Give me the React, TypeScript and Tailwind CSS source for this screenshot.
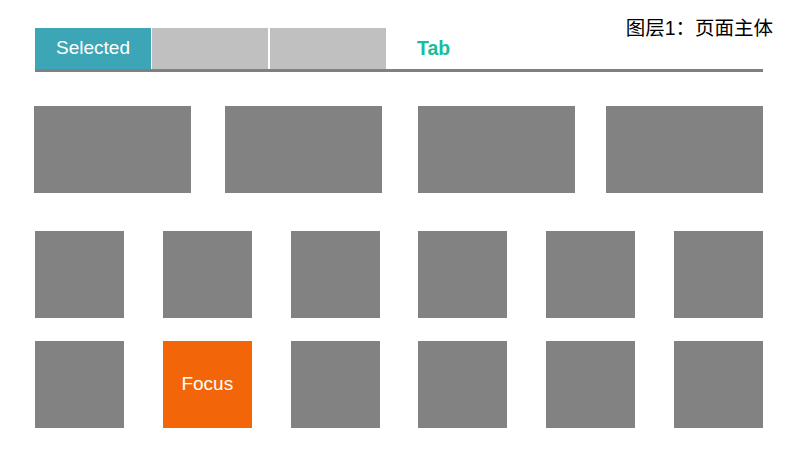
const smallRows = [
  [0, 1, 2, 3, 4, 5],
  [0, 1, 2, 3, 4, 5],
];

export default function App() {
  return (
    <div
      className="relative h-[450px] w-[800px] overflow-hidden bg-white"
      style={{ fontFamily: '"Liberation Sans", Arial, sans-serif' }}
    >
      {/* layer label */}
      <span
        className="absolute right-[27px] top-[19px] text-[19.5px] leading-none text-black"
        style={{ fontFamily: '"Liberation Sans", "Noto Sans CJK SC", sans-serif' }}
      >
        图层1：页面主体
      </span>

      {/* tab bar */}
      <div className="ml-[35px] mt-[28px] flex h-[44px] w-[728px] items-stretch border-b-[3px] border-[#808080]">
        <div className="flex w-[116px] items-center justify-center bg-[#3ca6b7] text-[19px] text-white">
          Selected
        </div>
        <div className="ml-px w-[116px] bg-[#c0c0c0]" />
        <div className="ml-[2px] w-[116px] bg-[#c0c0c0]" />
        <div className="ml-[31px] flex items-center text-[19.5px] font-bold text-[#1abc9c]">
          Tab
        </div>
      </div>

      {/* wide cards */}
      <div className="ml-[34px] mt-[34px] flex w-[729px]">
        <div className="h-[87px] w-[157px] bg-[#828282]" />
        <div className="ml-[34px] h-[87px] w-[157px] bg-[#828282]" />
        <div className="ml-[36px] h-[87px] w-[157px] bg-[#828282]" />
        <div className="ml-[31px] h-[87px] w-[157px] bg-[#828282]" />
      </div>

      {/* small tiles */}
      <div className="ml-[35px] mt-[38px] flex w-[728px] flex-col gap-[23px]">
        {smallRows.map((row, r) => (
          <div key={r} className="flex justify-between">
            {row.map((c) =>
              r === 1 && c === 1 ? (
                <div
                  key={c}
                  className="flex h-[87px] w-[89px] items-center justify-center bg-[#f26508] text-[19px] text-white"
                >
                  Focus
                </div>
              ) : (
                <div key={c} className="h-[87px] w-[89px] bg-[#828282]" />
              )
            )}
          </div>
        ))}
      </div>
    </div>
  );
}
